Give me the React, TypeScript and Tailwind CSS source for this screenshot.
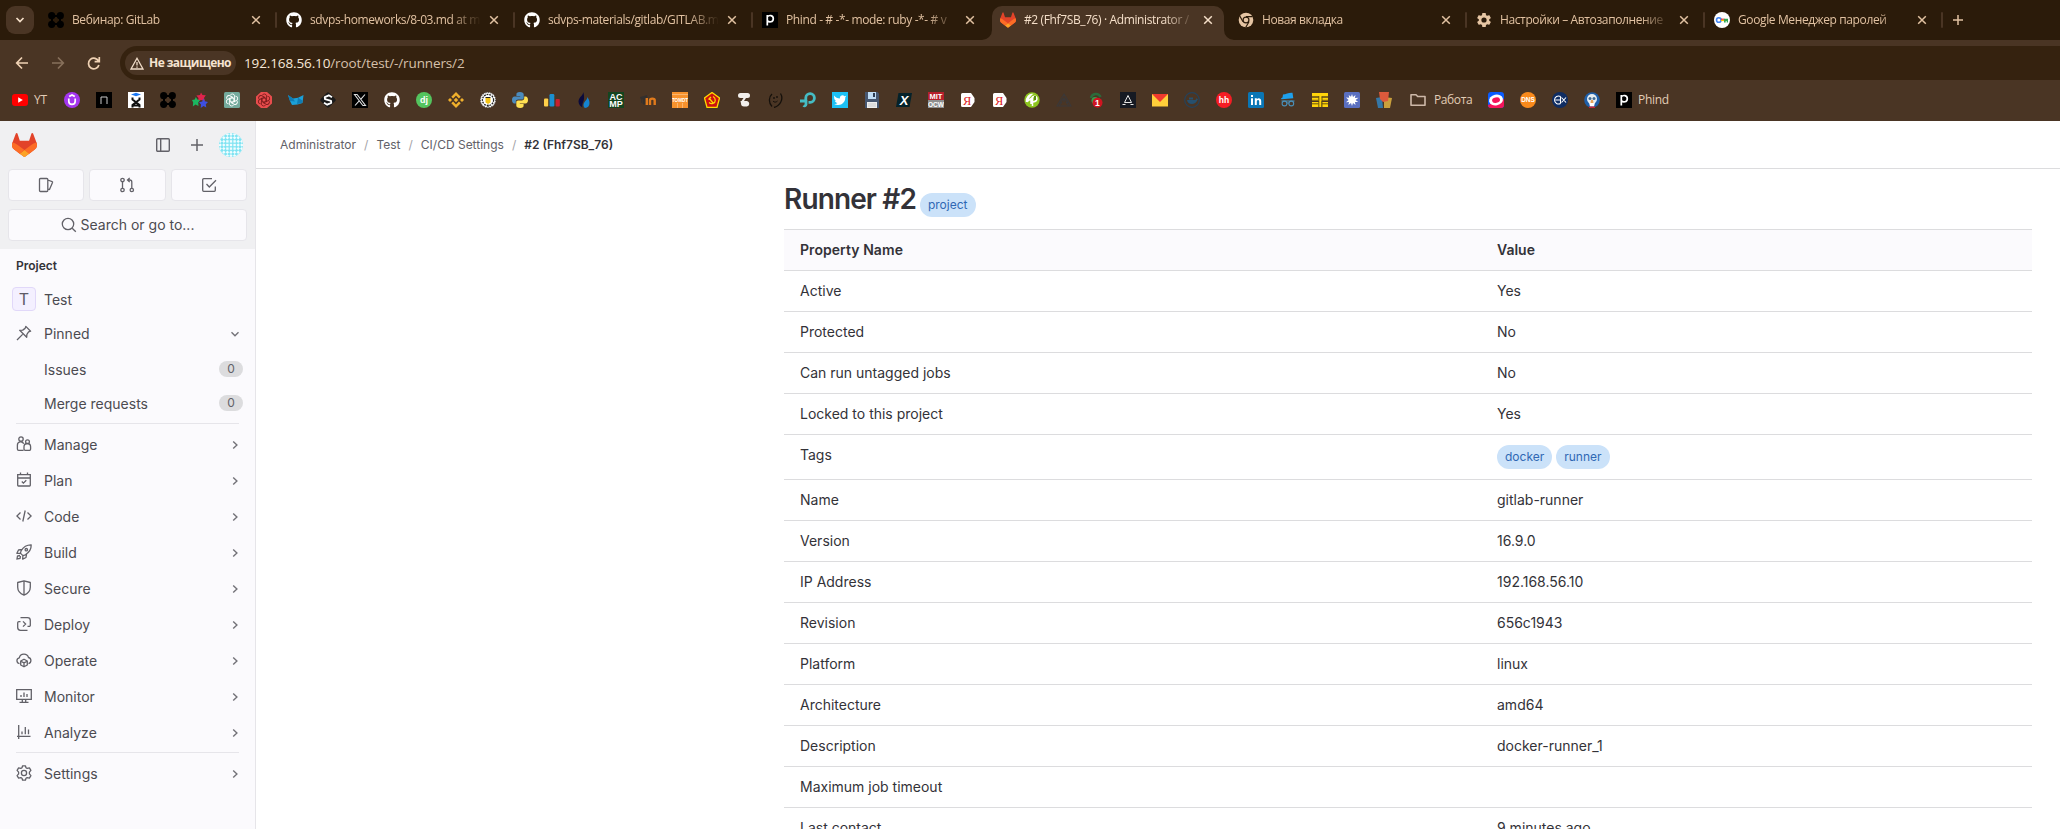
import React from "react";
import { FaGithub } from "react-icons/fa";

type P = { children?: React.ReactNode };

const S = ({ children, size = 16 }: P & { size?: number }) => (
  <svg width={size} height={size} viewBox="0 0 16 16" className="shrink-0 overflow-hidden">
    {children}
  </svg>
);

const L = ({ children }: P) => (
  <svg width={16} height={16} viewBox="0 0 16 16" fill="none" stroke="#626168" strokeWidth={1.3} className="shrink-0">
    {children}
  </svg>
);

const Label = ({ x = 8, y, s, fill, children, w = 700 }: P & { x?: number; y: number; s: number; fill: string; w?: number }) => (
  <text x={x} y={y} fontSize={s} fill={fill} fontWeight={w} textAnchor="middle" fontFamily="Liberation Sans, sans-serif" letterSpacing="0">
    {children}
  </text>
);

/* ---------- favicons ---------- */
const Github = () => <FaGithub className="size-4 shrink-0 text-white" />;

const Netology = () => (
  <S>
    <path fill="none" stroke="#000" strokeWidth="2" d="M4 4h8v8H4z" />
    <g fill="#000">
      <circle cx="3.7" cy="3.7" r="3.6" />
      <circle cx="12.3" cy="3.7" r="3.6" />
      <circle cx="3.7" cy="12.3" r="3.6" />
      <circle cx="12.3" cy="12.3" r="3.6" />
    </g>
  </S>
);

const PhindIcon = () => (
  <S>
    <rect width="16" height="16" fill="#000" />
    <path d="M5.300 13.500V3M5.300 4.800C7 2.800 11.300 3 11.300 6.700S7 10.500 5.300 8.600" fill="none" stroke="#fff" strokeWidth="1.700" />
  </S>
);

const Tanuki = ({ className }: { className: string }) => (
  <svg viewBox="0 0 25 24" className={className}>
    <path d="m24.507 9.5-.034-.09L21.082.562a.896.896 0 0 0-1.694.091l-2.29 7.01H7.825L5.535.653a.898.898 0 0 0-1.694-.09L.451 9.411.416 9.5a6.297 6.297 0 0 0 2.09 7.278l.012.01.03.022 5.16 3.867 2.56 1.935 1.554 1.176a1.051 1.051 0 0 0 1.268 0l1.555-1.176 2.56-1.935 5.197-3.89.014-.01A6.297 6.297 0 0 0 24.507 9.5Z" fill="#E24329" />
    <path d="m24.507 9.5-.034-.09a11.44 11.44 0 0 0-4.56 2.051l-7.447 5.632 4.742 3.584 5.197-3.89.014-.01A6.297 6.297 0 0 0 24.507 9.5Z" fill="#FC6D26" />
    <path d="m7.707 20.677 2.56 1.935 1.555 1.176a1.051 1.051 0 0 0 1.268 0l1.555-1.176 2.56-1.935-4.743-3.584-4.755 3.584Z" fill="#FCA326" />
    <path d="M5.01 11.461a11.43 11.43 0 0 0-4.56-2.05L.416 9.5a6.297 6.297 0 0 0 2.09 7.278l.012.01.03.022 5.16 3.867 4.745-3.584-7.444-5.632Z" fill="#FC6D26" />
  </svg>
);

const ChromeMark = () => (
  <S>
    <circle cx="8" cy="8" r="7.3" fill="#e6c5a3" />
    <circle cx="8" cy="8" r="3.5" fill="#2b1b0a" />
    <circle cx="8" cy="8" r="2.3" fill="#e6c5a3" />
    <path d="M8 4.6h6.6M5 9.7 1.8 4M11 9.7 7.8 15.2" stroke="#2b1b0a" strokeWidth="1.2" />
  </S>
);

const Gear = () => (
  <svg width="16" height="16" viewBox="1 1 22 22" className="shrink-0">
    <path fill="#e6c5a3" d="M19.14 12.94c.04-.3.06-.61.06-.94s-.02-.64-.07-.94l2.03-1.58a.49.49 0 0 0 .12-.61l-1.92-3.32a.49.49 0 0 0-.59-.22l-2.39.96a7 7 0 0 0-1.62-.94l-.36-2.54a.48.48 0 0 0-.48-.41h-3.84a.47.47 0 0 0-.47.41l-.36 2.54c-.59.24-1.13.57-1.62.94l-2.39-.96a.47.47 0 0 0-.59.22L2.74 8.87a.48.48 0 0 0 .12.61l2.03 1.58a7 7 0 0 0 0 1.88l-2.03 1.58a.49.49 0 0 0-.12.61l1.92 3.32c.12.22.37.29.59.22l2.39-.96c.5.38 1.03.7 1.62.94l.36 2.54c.05.24.24.41.48.41h3.84c.24 0 .44-.17.47-.41l.36-2.54a7 7 0 0 0 1.62-.94l2.39.96c.22.08.47 0 .59-.22l1.92-3.32a.47.47 0 0 0-.12-.61zM12 15.6a3.6 3.6 0 1 1 0-7.2 3.6 3.6 0 0 1 0 7.2" />
  </svg>
);

const GoogleKey = () => (
  <S>
    <circle cx="8" cy="8" r="8" fill="#fff" />
    <circle cx="4.800" cy="8" r="2.300" fill="none" stroke="#4285f4" strokeWidth="1.600" />
    <path d="M7 8.400h3" stroke="#fbbc04" strokeWidth="1.400" />
    <path d="M7 7.200h3.500" stroke="#ea4335" strokeWidth="1.200" />
    <path d="M10 6.800h4v3.600h-1.300V9h-1v1.400H10z" fill="#34a853" />
  </S>
);

/* ---------- browser tabs ---------- */
type TabT = { title: string; icon: React.ReactNode; active?: boolean; sep?: boolean };

const tabs: TabT[] = [
  { title: "Вебинар: GitLab", icon: <Netology />, sep: true },
  { title: "sdvps-homeworks/8-03.md at m", icon: <Github />, sep: true },
  { title: "sdvps-materials/gitlab/GITLAB.m", icon: <Github />, sep: true },
  { title: "Phind - # -*- mode: ruby -*- # v", icon: <PhindIcon /> },
  { title: "#2 (Fhf7SB_76) · Administrator /", icon: <Tanuki className="size-4 shrink-0" />, active: true },
  { title: "Новая вкладка", icon: <ChromeMark />, sep: true },
  { title: "Настройки – Автозаполнение", icon: <Gear />, sep: true },
  { title: "Google Менеджер паролей", icon: <GoogleKey />, sep: true },
];

const Tab = ({ t }: { t: TabT }) => (
  <div className="relative flex h-10 w-[238px] shrink-0 pt-1.5">
    {t.active && (
      <svg width="252" height="34" viewBox="0 0 252 34" className="absolute -left-2.5 top-1.5 z-0">
        <path fill="#4a3524" d="M0 34a10 10 0 0 0 10-10V10A10 10 0 0 1 20 0H232a10 10 0 0 1 10 10V24a10 10 0 0 0 10 10z" />
      </svg>
    )}
    <div className="relative flex h-7 w-[237px] items-center pl-2">
      {t.icon}
      <span
        className={
          "ml-2 w-[172px] overflow-hidden whitespace-nowrap text-[12px] leading-5 tracking-[-0.38px] [mask-image:linear-gradient(to_right,#000_140px,transparent_171px)] " +
          (t.active ? "text-[#f5dfc9]" : "text-[#e2c2a2]")
        }
      >
        {t.title}
      </span>
      <svg width="10" height="10" viewBox="0 0 10 10" className="ml-[7px] shrink-0">
        <path d="M1.2 1.2l7.6 7.6M8.8 1.2l-7.6 7.6" stroke={t.active ? "#f5dfc9" : "#e2c2a2"} strokeWidth="1.5" />
      </svg>
      {t.sep && <i className="ml-auto h-4 w-[2px] rounded bg-[#4a3524]" />}
    </div>
  </div>
);

/* ---------- bookmarks ---------- */
const Ya = () => (
  <S>
    <path d="M2.500 1H11l3.500 5v4L11 15H2.500A1.500 1.500 0 0 1 1 13.500v-11A1.500 1.500 0 0 1 2.500 1z" fill="#fff" />
    <text x="7" y="12.500" fontSize="12.500" fill="#e02020" textAnchor="middle" fontFamily="Liberation Serif, serif">Я</text>
  </S>
);

const Knot = ({ color }: { color: string }) => (
  <g fill="none" stroke={color} strokeWidth=".9">
    {[0, 60, 120, 180, 240, 300].map((a) => (
      <path key={a} transform={"rotate(" + a + " 8 8)"} d="M8 5.2 10.6 6.7V3.9A2.3 2.3 0 0 0 6.3 3.2" />
    ))}
    <circle cx="8" cy="8" r="2" />
  </g>
);

const marks: React.ReactNode[] = [
  <S><circle cx="8" cy="8" r="8" fill="#a435f0" /><path d="M4.8 6.5V9.2a3.2 3.2 0 0 0 6.4 0V6.5M5.2 4.6 8 2.9l2.8 1.7" fill="none" stroke="#fff" strokeWidth="1.7" /></S>,
  <S><rect width="16" height="16" fill="#000" /><path d="M5 12V5h6v7" fill="none" stroke="#c9c9c9" strokeWidth="1" /></S>,
  <S><rect width="16" height="16" fill="#fff" /><path d="M3 2.500 8 .8l5 1.7-5 1.8z" fill="#1976f3" /><path d="M4.500 5.500v2L8 10.300l3.500-2.800v-2M4.500 15.500v-2.400L8 10.300l3.500 2.800v2.400M4.500 13.500h7" fill="none" stroke="#111" strokeWidth="2" /></S>,
  <Netology />,
  <S><path d="M9 .5l1.500 2.600 3.300.2-1.800 2.700 1 3L9 8 6 9.200l.5-3.200L4.400 3.600 8 3z" fill="#e0244c" /><path d="M3.800 5l1.600 2.500 2.600.8-1.800 2.200.3 3.500-3-1.500L.8 14.500l.4-4L0 8l2.800-.4z" fill="#1bb660" /><path d="M11.500 6.500l1.300 2.700 3.200.8-2.200 2.200.5 3.400-2.800-1.600-2.800 2 .3-3.500-2-2.300 3.200-.7z" fill="#3d4fe0" /></S>,
  <S><rect width="16" height="16" rx="1.500" fill="#74aa9c" /><Knot color="#fff" /></S>,
  <S><path d="M5 0h6l5 4.500v7L11 16H5l-5-4.500v-7z" fill="#e84d4d" /><Knot color="#7c1c1c" /></S>,
  <S><path d="M0 3l5 3.400 5-.6L15.500 3 14.500 11l-5 1.500L4 13 2 9z" fill="#1ba0d8" /><path d="M0 3l5 3.400 2 3.200L2 9zM10 5.800 14.500 8.500 14 11 9 12z" fill="#0f7cb4" /></S>,
  <S><path d="M8 .3 15.700 8 8 15.700.3 8z" fill="#1b1b1b" stroke="#1b1b1b" strokeWidth="5" strokeLinejoin="round" transform="translate(2 2) scale(.75)" /><path d="M12 5.200 8.800 3.300 4.800 5.200 5 7.200 11 8.800 11.200 10.800 7.200 12.700 4 10.800" fill="none" stroke="#fff" strokeWidth="1.900" strokeLinejoin="round" /></S>,
  <S><rect width="16" height="16" fill="#000" /><path d="M2.500 2.500h2.600l8.400 11h-2.600zM13 2.500l-4.300 4.900M7.200 8.900l-4.200 4.600" fill="none" stroke="#ddd" strokeWidth="1.100" /></S>,
  <Github />,
  <S><circle cx="8" cy="8" r="8" fill="#54c45e" /><Label y={11} s={9} fill="#fff">dj</Label></S>,
  <S><g fill="#f0b02c"><path d="M8 5.8 10.2 8 8 10.2 5.8 8z" /><path d="M8 0l4.700 4.700-1.800 1.800L8 3.600 5.100 6.500 3.300 4.700zM8 16l4.700-4.700-1.800-1.800L8 12.400 5.100 9.500l-1.800 1.800zM0 8l2-2 2 2-2 2zM12 8l2-2 2 2-2 2z" /></g></S>,
  <S><circle cx="8" cy="8" r="7.800" fill="#fff" /><circle cx="8" cy="8" r="5.600" fill="none" stroke="#222" strokeWidth="1.300" strokeDasharray="1.800 .900" /><circle cx="8" cy="8" r="7.500" fill="none" stroke="#222" strokeWidth=".900" strokeDasharray="1 1.500" /><path d="M5.500 6h5v4.500L8 12l-2.500-1.500z" fill="#f3c318" /><path d="M5.500 5.500h5M8 12.500V15" stroke="#222" strokeWidth="1.100" /></S>,
  <S><path d="M7.900 0C5 0 4.400 1.200 4.400 2.400V4H8.200v.6H2.500C1 4.600 0 5.800 0 8.100s1 3.500 2.300 3.500h1.500V9.800c0-1.300 1.100-2.200 2.300-2.200h3.800c1.100 0 1.800-.8 1.800-1.800V2.400C11.700 1 10.500 0 7.900 0z" fill="#4b8bbe" /><path d="M8.100 16c2.900 0 3.500-1.200 3.500-2.400V12H7.800v-.6h5.700c1.500 0 2.500-1.200 2.500-3.500s-1-3.500-2.300-3.500h-1.500v1.800c0 1.300-1.100 2.200-2.300 2.200H6.100c-1.100 0-1.800.8-1.800 1.800v3.400C4.300 15 5.500 16 8.100 16z" fill="#ffe052" /></S>,
  <S><rect x="0" y="6.500" width="4.200" height="8" rx="1" fill="#ffd04a" /><rect x="5.500" y="2" width="4.800" height="12.500" rx="1.200" fill="#1a8fd0" /><rect x="11.600" y="7" width="4.200" height="7.500" rx="1" fill="#c8202e" /></S>,
  <S><path d="M7 0c1 3-4.500 5-4.500 9.500 0 3 2 5 4 6C5.500 12 8 9.500 8 6.500 8.200 4 8 1.500 7 0z" fill="#0a0a3c" /><path d="M11.500 5c0 3-4 4.500-4 8 0 1.400.6 2.400 1.500 3 3-.2 4.500-2 4.500-5 0-2.500-1-4-2-6z" fill="#1583d0" /></S>,
  <S><rect width="16" height="16" fill="#14451f" /><Label y={7.6} s={9} fill="#fff">AC</Label><Label y={15} s={9} fill="#fff">MP</Label></S>,
  <S><path d="M0 5.500 7 3.500 6.500 6 1.500 7zM1.500 6v5M3 6.500h3V12H3z" fill="#33302e" stroke="#33302e" strokeWidth=".8" /><path d="M6.800 13V6M10 13V8.300c0-2.200 4.700-2.200 4.700 0V13" fill="none" stroke="#e07a1c" strokeWidth="2.400" /></S>,
  <S><rect width="16" height="16" fill="#f7922d" /><path d="M0 2.500h16" stroke="#fbb56c" strokeWidth="1" /><Label y={9.8} s={4.6} fill="#fff">TOMDT</Label><path d="M5.500 11v5M10.500 11v5" stroke="#fbb56c" /></S>,
  <S><path d="M8 .5 15.500 6 13 15.300H3L.5 6z" fill="#cc1010" stroke="#ffd900" strokeWidth="1.300" /><path d="M5 6l4.500 5.500M4.500 7.500l2.500-2.500M9 4.500c3 1.500 3 6 0 7-1.500.5-3 0-4-1" fill="none" stroke="#ffd900" strokeWidth="1.200" /></S>,
  <S><path d="M4.500 1h7a2.500 2.500 0 0 1 0 5H10L8 9H5.500L7.500 6h-3a2.500 2.500 0 0 1 0-5zM4.500 9H11a2.800 2.800 0 0 1 0 5.500H8a3 3 0 0 1-3-3z" fill="#f2efec" /></S>,
  <S><path d="M4 2C.5 5 .5 11 4 14.500M12.500 1.500C16 7 12 14 6 15.500" fill="none" stroke="#15100b" strokeWidth="1.300" /><circle cx="6" cy="6" r=".9" fill="#15100b" /><circle cx="9" cy="5" r=".9" fill="#15100b" /><path d="M5 9c1 1.500 3 1.500 4.500 0" fill="none" stroke="#15100b" strokeWidth="1" /></S>,
  <S><path d="M5.800 8V5.800A4.300 4.300 0 1 1 10.200 10.300H8.500" fill="none" stroke="#45bcc4" strokeWidth="2.800" /><path d="M0 9h7M6 8v4.500a1.500 1.500 0 0 1-2.500 1" fill="none" stroke="#45bcc4" strokeWidth="2.800" /></S>,
  <S><rect width="16" height="16" fill="#1dc1f5" /><path d="M2 3.500c1.500 2 3.500 3 5.800 3 0-3 3-4 4.700-2.300l1.800-.4-1 1.500C13.500 10 10 13 6.500 13c-1.700 0-3-.3-4.200-1 1.700 0 2.700-.5 3.200-1-1.400-.2-2.200-1-2.500-2h1C2.700 8 2.200 7 2.200 6z" fill="#fff" /></S>,
  <S><path d="M1 0h12.500L15 1.500V16H1z" fill="#46566f" /><path d="M4 0h8v7H4z" fill="#bfdcf5" /><path d="M9 1h2v4H9z" fill="#2c3a50" /><path d="M3 10h10v6H3z" fill="#eee" /><path d="M4 12h8M4 14h8" stroke="#bbb" strokeWidth=".7" /></S>,
  <S><path d="M2.500 1H16l-2.500 14H0z" fill="#04222a" /><Label y={12.8} s={13} fill="#fff"><tspan fontStyle="italic">X</tspan></Label></S>,
  <S><rect width="16" height="8" fill="#b5202c" /><rect y="8" width="16" height="8" fill="#8f8f8f" /><Label y={7} s={7.5} fill="#fff">MIT</Label><Label y={14.8} s={6.5} fill="#fff">OCW</Label></S>,
  <Ya />,
  <Ya />,
  <S><circle cx="8" cy="8" r="7.700" fill="#8dc51f" /><path d="M2.500 10C2 5 6 2.500 7.500 2.500 4.500 5 4 7 4 9l3-2.500V12M8.500 14V5c5-3 6.500 4 .5 5" fill="none" stroke="#fff" strokeWidth="1.500" /><path d="M10 4h2v4h-2z" fill="#5c8c12" /></S>,
  <S><path d="M8 2 15 14H1zM8 6v4M4 11l4-5 4 5M3 14l3-4M13 14l-3-4" fill="none" stroke="#3b3838" strokeWidth="1.100" /></S>,
  <S><path d="M3 6a5 5 0 0 1 9.500-1" fill="none" stroke="#2b6b3a" strokeWidth="2.500" /><circle cx="7" cy="8.500" r="3.500" fill="#39a04a" /><circle cx="9.500" cy="10.800" r="5" fill="#d01420" /><Label x={9.3} y={14} s={8.5} fill="#fff">1</Label></S>,
  <S><rect width="16" height="16" fill="#161a23" /><path d="M8 3.500 11.500 10.500h-7zM2.500 12.500h3M10.500 12.500h3" fill="none" stroke="#e6e6e6" strokeWidth="1" /></S>,
  <S><path d="M0 2h16v12.500H0z" fill="#ffcf3a" /><path d="M0 2h16L8 10z" fill="#f03a2e" /></S>,
  <S><circle cx="8" cy="8" r="7.300" fill="none" stroke="#26425a" strokeWidth="1.200" /><path d="M3 8h8c1 0 1.500-1 1.300-2l1.700 1.500c-1 0-1.200 4.500-6 4.500-3 0-4.500-1.500-5-4zM5 5.500h4v2H5z" fill="#26506e" /></S>,
  <S><circle cx="8" cy="8" r="8" fill="#f51d24" /><Label y={11} s={8.5} fill="#fff">hh</Label></S>,
  <S><rect width="16" height="16" rx="1.500" fill="#0a76b5" /><path d="M3 6.2h2V13H3zM3 3h2v2H3zM6.8 13V6.2h2v1c1-1.700 4.400-1.500 4.400 1.700V13h-2V9.500c0-2.300-2.400-2-2.400 0V13z" fill="#fff" /></S>,
  <S><path d="M3 2.500C6 2.500 8.500.5 12.500.8L13.300 6.300 1.800 7.300C.5 7.300 1 6 2.500 5.500z" fill="#1ea0ec" /><g fill="none" stroke="#4a8fb8" strokeWidth="1.100"><circle cx="4.500" cy="11.500" r="2.400" /><circle cx="11.300" cy="11.500" r="2.400" /><path d="M6.900 11h2M1.500 9h13" /></g></S>,
  <S><path d="M0 1h16v3.500H0zM0 5.500h7V9H0zM0 10h7v5H0zM9 5.500h7V9H9zM10 10h6v5h-6zM7 4h2.500v11H7z" fill="#ffd40a" /><path d="M0 5h6.500M0 8.300h6.500M0 11.800h6.500M10 5h6M10 8.300h6M10 11.800h6M6.800 4v11M10 4.500v11" stroke="#5a4a10" strokeWidth=".9" /></S>,
  <S><rect width="16" height="16" rx="1.500" fill="#5a6fc0" /><path d="m8 2 1 3 2.500-2-.6 3 3.600-.3-2.900 2.400 2.600 2-3.200-.1.500 3-2.500-2L8 14l-1-3-2.600 2 .6-3-3 .2 2.600-2.300L2 5.600l3.200.2L4.700 3 7 4.700z" fill="#fff" /></S>,
  <S><path d="M0 6l6-1 1 11H2z" fill="#3577a6" /><path d="M16 6 8 5v11h6z" fill="#c9a03c" /><path d="M3 0h10l-1 9-5 1-3-3z" fill="#dc5a3c" /></S>,
];

const marksAfter: React.ReactNode[] = [
  <S><rect width="16" height="16" rx="3" fill="#0a5cff" /><path d="M0 13 16 7v6a3 3 0 0 1-3 3H3a3 3 0 0 1-3-3z" fill="#f5145a" /><ellipse cx="8" cy="8" rx="7" ry="5.300" fill="#fff" transform="rotate(-12 8 8)" /><ellipse cx="8" cy="8.200" rx="4" ry="2.700" fill="#f5145a" transform="rotate(-12 8 8)" /></S>,
  <S><circle cx="8" cy="8" r="8" fill="#f98a1c" /><Label y={10.3} s={6.5} fill="#fff">DNS</Label></S>,
  <S><circle cx="8" cy="8" r="8" fill="#0f2d63" /><path d="M8.5 4.500a4 4 0 1 0 0 7M3.500 8h5M8.500 4.500v7M9.500 5.500l4.500 5M14 5.500l-4.500 5" fill="none" stroke="#fff" strokeWidth="1.100" /></S>,
  <S><circle cx="8" cy="8" r="7.800" fill="#1f5fa8" /><circle cx="8" cy="7" r="5" fill="#e6edf2" /><circle cx="6" cy="6.500" r="1.500" fill="#3f6a92" /><circle cx="10" cy="6.500" r="1.500" fill="#3f6a92" /><path d="M5 10.500h6l-1 4H6z" fill="#fff" /><path d="M7 8h2l.5 3h-3z" fill="#e8a35a" /><path d="M5 14.500h6V16H5z" fill="#c3273e" /></S>,
];

const Browser = () => (
  <header className="h-[121px] bg-[#4a3524] font-['Open_Sans','Noto_Sans',sans-serif] tracking-[-0.15px]">
    <div className="flex h-10 bg-[#2b1b0a]">
      <div className="w-10 shrink-0 pl-1.5 pt-1.5">
        <div className="flex size-7 items-center justify-center rounded-[9px] bg-[#4a3524]">
          <svg width="10" height="8" viewBox="0 0 10 8"><path d="M1.5 2 5 5.500 8.500 2" fill="none" stroke="#f5dfc9" strokeWidth="1.700" /></svg>
        </div>
      </div>
      {tabs.map((t) => <Tab key={t.title} t={t} />)}
      <svg width="12" height="12" viewBox="0 0 12 12" className="ml-2 mt-3.5"><path d="M6 1v10M1 6h10" stroke="#e2c2a2" strokeWidth="1.500" /></svg>
    </div>
    <div className="flex h-10 items-center pt-1.5">
      <svg width="120" height="34" viewBox="0 0 120 34" fill="none" strokeWidth="1.700" className="shrink-0">
        <path d="M28 17H17M22 11.500 16.700 17l5.300 5.500" stroke="#f0d2b4" />
        <path d="M52 17h11M58 11.500 63.300 17 58 22.500" stroke="#87705b" />
        <path d="M98.700 15.500A5.300 5.300 0 1 0 98.900 19M99.300 11v4.700h-4.700" stroke="#f0d2b4" />
      </svg>
      <div className="flex h-[34px] flex-1 items-center rounded-l-full bg-[#35220f] pl-[5px]">
        <div className="flex h-6 w-[111px] items-center rounded-full bg-[#4a3524] pl-[5px]">
          <svg width="14" height="13" viewBox="0 0 14 13" fill="none" stroke="#f0dcc8" strokeWidth="1.300"><path d="M7 1.300 13 12H1zM7 5v3.500M7 9.500v1.300" /></svg>
          <span className="ml-[5px] whitespace-nowrap text-[12px] font-bold tracking-[-0.55px] text-[#f5e3d0]">Не защищено</span>
        </div>
        <span className="ml-2 text-[13.5px] text-[#d6c0aa] tracking-[-0.12px]"><span className="text-[#f7e8d8]">192.168.56.10</span>/root/test/-/runners/2</span>
      </div>
    </div>
    <div className="flex h-10 items-center pl-3 text-[12px] text-[#e2cdb6]">
      <S><rect y="2" width="16" height="12" rx="3" fill="#f00" /><path d="M6.200 5.300 10.800 8l-4.600 2.700z" fill="#fff" /></S>
      <span className="ml-1.5 w-[30px]">YT</span>
      <div className="flex gap-4">{marks.map((m, i) => <div key={i} className="size-4">{m}</div>)}</div>
      <svg width="16" height="14" viewBox="0 0 16 14" className="ml-[18px] shrink-0"><path d="M1 12.300V1.700h5l1.700 1.800H15v8.800z" fill="none" stroke="#cdb8a8" strokeWidth="1.600" strokeLinejoin="round" /></svg>
      <span className="ml-2 w-[54px] whitespace-nowrap tracking-[-0.4px]">Работа</span>
      <div className="flex gap-4">{marksAfter.map((m, i) => <div key={i} className="size-4">{m}</div>)}</div>
      <div className="ml-4"><PhindIcon /></div>
      <span className="ml-1.5 tracking-[-0.3px]">Phind</span>
    </div>
  </header>
);

/* ---------- sidebar ---------- */
const icons: Record<string, React.ReactNode> = {
  pin: <L><path d="M9.800 1.400 14.600 6.200 12.600 6.900 10.900 9.300 10.700 12.300 3.700 5.300 6.700 5.100 9.100 3.400zM6.600 9.400 1 15" strokeLinejoin="round" /></L>,
  manage: <L><circle cx="5" cy="3" r="2.200" /><circle cx="11.500" cy="5.700" r="1.900" /><path d="M7.500 14.300H2.700a1.300 1.300 0 0 1-1.300-1.300V9a3.300 3.300 0 0 1 6.300-1.300M8 10.800a3.300 3.300 0 0 1 6.600 0v2.200a1.300 1.300 0 0 1-1.300 1.300H9.300A1.300 1.300 0 0 1 8 13z" /></L>,
  plan: <L><path d="M1.700 2.700h12.600v10.600a.7.700 0 0 1-.7.700H2.400a.7.700 0 0 1-.7-.7zM1.700 6h12.600M4.500.500v2.200M11.500.500v2.200M5.800 9.500l1.600 1.600 2.900-2.800" /></L>,
  code: <L><path d="M4.500 4.500.900 8l3.600 3.500M11.500 4.500 15.100 8l-3.600 3.500M9.200 2.500 6.800 13.500" /></L>,
  build: <L><path d="M15.200.800C10.500.700 7.400 3 5.200 6.600L4.400 9.100l2.500 2.500 2.500-.8C13 8.600 15.300 5.500 15.200.800zM6 5.400 2.500 6 .900 9.300l3.500-.2M10.600 10l-.6 3.500-3.300 1.600.2-3.500" strokeLinejoin="round" /><circle cx="10.300" cy="5.700" r="1.200" /><path d="M4 11.500 1.500 12 1 15l3-.500.500-2.500" /></L>,
  secure: <L><path d="M8 .900 14.300 2.500v4.700c0 4-2.800 6.500-6.300 8-3.500-1.500-6.300-4-6.300-8V2.500zM8 .900v14.300" strokeLinejoin="round" /></L>,
  deploy: <L><path d="M4.500 1.700h7a2.800 2.800 0 0 1 2.800 2.800v4.700a1.200 1.200 0 0 1-1.200 1.200H11.500M11.500 14.300H4.500a2.800 2.800 0 0 1-2.800-2.800V6.800A1.200 1.200 0 0 1 2.900 5.600H4.500M7 5.400 9.600 8 7 10.600" /></L>,
  operate: <L><path d="M3.500 11.700A3 3 0 0 1 3.300 5.800 4.800 4.800 0 0 1 12.500 5.500a3.200 3.200 0 0 1 0 6.200" /><path d="M8 7.200 11.300 9v4L8 14.800 4.700 13V9zM4.900 9.200 8 10.900l3.100-1.700M8 10.900v3.800" strokeLinejoin="round" /></L>,
  monitor: <L><path d="M.7 1.700h14.600v9.600H.7zM6.300 11.500v2.800M9.700 11.500v2.800M3.500 14.400h9M5 7v2M8 4.500V9M11 6v3" /></L>,
  analyze: <L><path d="M2.700 1v14M1 12.300h13.500M6 7.500v2.800M9.300 3v7.300M12.500 5.500v4.800" /></L>,
  settings: <L><path d="M6.600.800h2.800l.6 2 1.100.6 2.300-.5 1.500 2.500-1.500 1.700v1.800l1.500 1.700-1.500 2.500-2.300-.5-1.100.6-.6 2H6.600L6 13.200l-1.100-.6-2.300.5L1.100 10.600l1.500-1.700V7.100L1.100 5.400l1.500-2.500 2.300.5L6 2.800z" strokeLinejoin="round" /><circle cx="8" cy="8" r="2.600" /></L>,
};

const Chevron = ({ down = false }: { down?: boolean }) => (
  <svg width="10" height="10" viewBox="0 0 10 10" className="ml-auto mr-[15px]" fill="none" stroke="#737278" strokeWidth="1.400">
    {down ? <path d="M1.500 3.200 5 6.700 8.500 3.200" /> : <path d="M3.200 1.500 6.900 5 3.200 8.500" />}
  </svg>
);

const Item = ({ icon, label }: { icon: string; label: string }) => (
  <div className="flex h-9 items-center pl-4">
    <div className="-mt-0.5">{icons[icon]}</div>
    <span className="-mt-px ml-3">{label}</span>
    <Chevron />
  </div>
);

const Pill = ({ label }: { label: string }) => (
  <div className="flex h-[34px] items-center pl-11 pr-3">
    <span className="-mt-px">{label}</span>
    <span className="-mt-[3px] ml-auto flex h-4 w-6 items-center justify-center rounded-full bg-[#dcdcde] text-[12px] text-[#626168]">0</span>
  </div>
);

const TopBtn = ({ children }: P) => (
  <div className="flex h-8 flex-1 items-center justify-center rounded-[4px] border border-[#e6e5ea] bg-[#fbfafd]">{children}</div>
);

const avatarDots = Array.from({ length: 49 }, (_, i) => [i % 7, Math.floor(i / 7)]);

const Sidebar = () => (
  <aside className="w-64 shrink-0 border-r border-[#e6e5e9] bg-[#fbfafd] text-[14px] text-[#4c4b51]">
    <div className="h-32 bg-[#f0f0f2] px-2 pt-3">
      <div className="flex h-6 items-center pl-1">
        <Tanuki className="h-[26px] w-[25px]" />
        <svg width="16" height="16" viewBox="0 0 16 16" fill="none" stroke="#626168" strokeWidth="1.400" className="ml-[118px]"><path d="M2.700 1.700h10.600a1 1 0 0 1 1 1v10.600a1 1 0 0 1-1 1H2.700a1 1 0 0 1-1-1V2.700a1 1 0 0 1 1-1zM5.700 1.700v12.600" /></svg>
        <svg width="12" height="12" viewBox="0 0 12 12" className="ml-5"><path d="M6 0v12M0 6h12" stroke="#626168" strokeWidth="1.500" /></svg>
        <svg width="24" height="24" viewBox="0 0 24 24" className="ml-4">
          <defs><clipPath id="av"><circle cx="12" cy="12" r="12" /></clipPath></defs>
          <g clipPath="url(#av)">
            <rect width="24" height="24" fill="#7fe3f2" />
            {avatarDots.map(([x, y], i) => {
              const inner = x > 1 && x < 5 && y > 1 && y < 5;
              const cx = 12 + (x - 3) * 3.6;
              const cy = 12 + (y - 3) * 3.6;
              return inner
                ? <rect key={i} x={cx - 1.2} y={cy - 1.2} width="2.4" height="2.4" fill="#f2fdff" />
                : <path key={i} d={"M" + cx + " " + (cy - 1.7) + "l1.7 1.7-1.7 1.7-1.7-1.7z"} fill="#f2fdff" />;
            })}
          </g>
        </svg>
      </div>
      <div className="mt-3 flex gap-[5px]">
        <TopBtn><L><path d="M2.500 1.500h6.300a1 1 0 0 1 1 1v11a1 1 0 0 1-1 1H2.500a1 1 0 0 1-1-1v-11a1 1 0 0 1 1-1zM9.800 3l4.300 1.600a.6.600 0 0 1 .4.800L11.500 12.500 9.800 12" /></L></TopBtn>
        <TopBtn><L><circle cx="3.500" cy="3" r="1.700" /><circle cx="3.500" cy="13" r="1.700" /><circle cx="12.800" cy="13" r="1.700" /><path d="M3.500 4.700v6.600M12.800 11.300V5a2 2 0 0 0-2-2H8.500M10.700.900 8.500 3l2.200 2.100" /></L></TopBtn>
        <TopBtn><L><path d="M11 1.700H2.700a1 1 0 0 0-1 1v10.600a1 1 0 0 0 1 1h10.600a1 1 0 0 0 1-1V9.500M5.500 7l2.800 3L15 3.300" /></L></TopBtn>
      </div>
      <div className="mt-2 flex h-8 items-center justify-center rounded-[4px] border border-[#e6e5ea] bg-[#fbfafd]">
        <svg width="16" height="16" viewBox="0 0 16 16" fill="none" stroke="#626168" strokeWidth="1.300"><circle cx="7" cy="7" r="5.700" /><path d="m11.200 11.200 3.600 3.600" /></svg>
        <span className="-mt-px ml-1">Search or go to...</span>
      </div>
    </div>
    <div className="flex h-[34px] items-center pl-4 text-[12px] font-semibold text-[#333238]">Project</div>
    <div className="flex h-[34px] items-center pl-3">
      <span className="-mt-0.5 flex size-6 items-center justify-center rounded-[4px] border border-[#e1d8f9] bg-[#f4f0ff] text-[16px] leading-6 text-[#5e5a66]">T</span>
      <span className="-mt-px ml-2">Test</span>
    </div>
    <div className="flex h-[34px] items-center pl-4">
      <div className="-mt-0.5">{icons.pin}</div>
      <span className="-mt-px ml-3">Pinned</span>
      <Chevron down />
    </div>
    <div className="pt-0.5"><Pill label="Issues" /><Pill label="Merge requests" /></div>
    <div className="mx-4 mb-[3px] mt-[2px] h-px bg-[#e6e5ea]" />
    <Item icon="manage" label="Manage" />
    <Item icon="plan" label="Plan" />
    <Item icon="code" label="Code" />
    <Item icon="build" label="Build" />
    <Item icon="secure" label="Secure" />
    <Item icon="deploy" label="Deploy" />
    <Item icon="operate" label="Operate" />
    <Item icon="monitor" label="Monitor" />
    <Item icon="analyze" label="Analyze" />
    <div className="mx-4 mb-[3px] mt-px h-px bg-[#e6e5ea]" />
    <Item icon="settings" label="Settings" />
  </aside>
);

/* ---------- runner details ---------- */
const Badge = ({ children }: P) => (
  <span className="inline-flex h-6 items-center rounded-full bg-[#cbe2f9] px-2 text-[12px] leading-4 text-[#2f68b4]">{children}</span>
);

const rows: [string, React.ReactNode][] = [
  ["Active", "Yes"],
  ["Protected", "No"],
  ["Can run untagged jobs", "No"],
  ["Locked to this project", "Yes"],
  ["Tags", null],
  ["Name", "gitlab-runner"],
  ["Version", "16.9.0"],
  ["IP Address", "192.168.56.10"],
  ["Revision", "656c1943"],
  ["Platform", "linux"],
  ["Architecture", "amd64"],
  ["Description", "docker-runner_1"],
  ["Maximum job timeout", ""],
  ["Last contact", "9 minutes ago"],
];

const Main = () => (
  <main className="min-w-0 flex-1 bg-white text-[#333238]">
    <nav className="flex h-12 items-center border-b border-[#dcdcde] pl-6 text-[12px] text-[#626168]">
      <span>Administrator</span><span className="mx-2 text-[#a4a3a8]">/</span>
      <span>Test</span><span className="mx-2 text-[#a4a3a8]">/</span>
      <span>CI/CD Settings</span><span className="mx-2 text-[#a4a3a8]">/</span>
      <span className="font-semibold text-[#333238]">#2 (Fhf7SB_76)</span>
    </nav>
    <div className="ml-[528px] w-[1248px]">
      <div className="flex h-[60px] items-start pt-3">
        <h1 className="text-[28px] font-semibold leading-9 tracking-[-0.88px]">Runner #2</h1>
        <div className="ml-1 mt-3 flex"><Badge>project</Badge></div>
      </div>
      <div className="flex h-[42px] border-y border-[#dcdcde] bg-[#fbfafd] text-[14px] font-semibold leading-10">
        <div className="w-[697px] pl-4 tracking-[0.06px]">Property Name</div>
        <div className="pl-4">Value</div>
      </div>
      {rows.map(([k, v]) => (
        <div key={k} className={"flex border-b border-[#dcdcde] text-[14px] leading-10 " + (k === "Tags" ? "h-[45px]" : "h-[41px]")}>
          <div className="w-[697px] pl-4">{k}</div>
          {k === "Tags" ? (
            <div className="flex gap-1 pl-4 pt-2.5"><Badge>docker</Badge><Badge>runner</Badge></div>
          ) : (
            <div className="pl-4">{v}</div>
          )}
        </div>
      ))}
    </div>
  </main>
);

export default function App() {
  return (
    <div className="h-[829px] w-[2060px] overflow-hidden bg-white font-['Inter',sans-serif]">
      <Browser />
      <div className="flex h-[708px] overflow-hidden">
        <Sidebar />
        <Main />
      </div>
    </div>
  );
}
